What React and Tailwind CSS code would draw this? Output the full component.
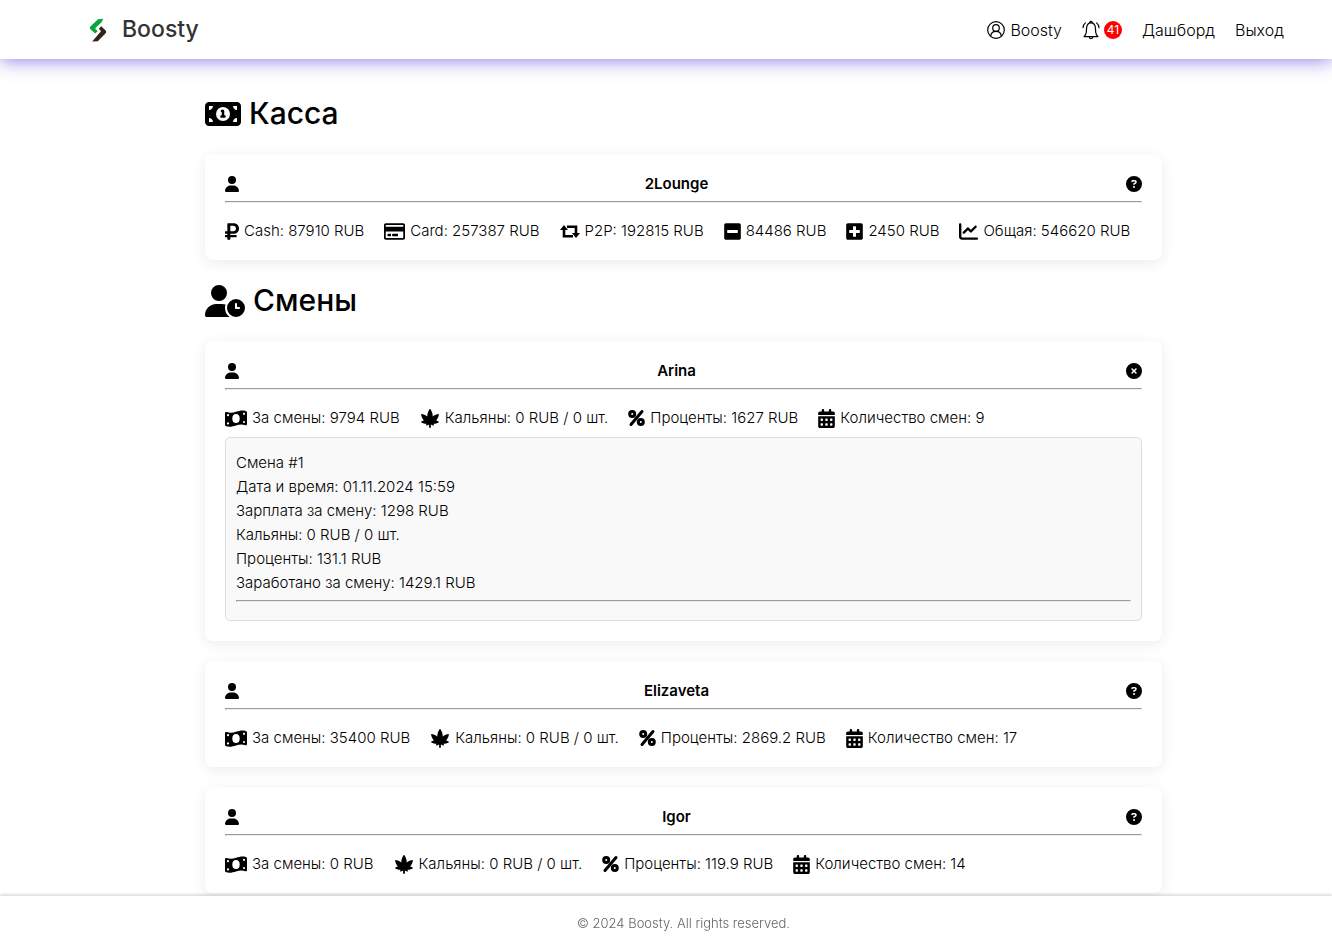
import { useState } from 'react';
import {
  FaUser, FaUserClock, FaMoneyBill1, FaChartLine, FaCannabis, FaCalendarDays, FaCircleQuestion, FaCircleXmark,
} from 'react-icons/fa6';
import { FaRubleSign, FaRegCreditCard, FaMinusSquare, FaPlusSquare } from 'react-icons/fa';

function PercentIcon({ className }) {
  return (
    <svg viewBox="0 0 17 19" className={className} fill="none" stroke="currentColor" strokeWidth="3">
      <circle cx="4.2" cy="5" r="2.5" />
      <circle cx="12.8" cy="13" r="2.5" />
      <path d="M14 2.5 3 15.5" strokeLinecap="round" />
    </svg>
  );
}

function RetweetIcon({ className }) {
  return (
    <svg viewBox="0 0 20 13" className={className} fill="none" stroke="currentColor" strokeWidth="2.6">
      <path d="M4 4v7.3h9M7 1.7h9V9" />
      <path d="M4 0 8 5H0ZM16 13l4-5h-8Z" fill="currentColor" stroke="none" />
    </svg>
  );
}

function BanknoteIcon({ className }) {
  return (
    <svg viewBox="0 0 22 19" className={className} fill="currentColor">
      <path d="M0 4.200C0 3.200.8 2.700 1.700 3c3.500 1.100 6.300.6 9.300-.3S17.500.9 20.800 1.900c.8.2 1.200.7 1.200 1.500V15c0 1-.8 1.500-1.700 1.200-3.500-1.100-6.300-.6-9.300.3s-6.500 1.800-9.800.8C.4 17.100 0 16.600 0 15.800Z" />
      <g fill="white">
        <ellipse cx="11" cy="9.600" rx="3.700" ry="4.500" />
        <circle cx="3" cy="6.200" r="1.100" />
        <circle cx="3" cy="14.400" r="1.100" />
        <circle cx="19" cy="4.800" r="1.100" />
        <circle cx="19" cy="13" r="1.100" />
      </g>
    </svg>
  );
}

function ProfileIcon() {
  return (
    <svg viewBox="0 0 18 18" className="size-[18px]" fill="none" stroke="currentColor" strokeWidth="1.2">
      <circle cx="9" cy="9" r="8.3" />
      <circle cx="9" cy="7" r="3.3" />
      <path d="M3.6 15.2C4 12.2 6 10.3 9 10.3s5 1.9 5.4 4.9" />
    </svg>
  );
}

function BellIcon() {
  return (
    <svg viewBox="0 0 18 20" className="h-5 w-[18px]" fill="none" stroke="currentColor" strokeWidth="1.2" strokeLinecap="round" strokeLinejoin="round">
      <path d="M9 2.8C6.200 2.800 4.800 5 4.600 8l-.3 4.200c-.1 1.500-.8 2.800-2.300 4.400h14c-1.500-1.600-2.200-2.900-2.300-4.400L13.400 8C13.200 5 11.800 2.800 9 2.800Z" />
      <path d="M7.800 2.600a1.200 1.200 0 0 1 2.400 0M7.200 16.800a1.800 1.800 0 0 0 3.600 0" />
      <path d="M3.400 2.900C2 4 1.200 5.600 1 7.600M14.600 2.900C16 4 16.800 5.600 17 7.600" />
    </svg>
  );
}

function Logo() {
  return (
    <svg viewBox="0 0 18 24" className="h-6 w-[18px]">
      <path d="M14.2 0.8 9 1.2 1.6 8.2C0.6 9.2 0.6 10.4 1.6 11.4L6.2 15.6 8.6 13.2 7 11.6C6.2 10.8 6.2 10.2 7 9.4L12.6 4.2Z" fill="#0aa63c" />
      <path d="M12.2 8.2 9.8 10.8 11.4 12.4C12 13 12 13.4 11.4 14L3.2 23.4 8.8 23.2 16.4 15.6C17.4 14.6 17.4 13.2 16.4 12.2Z" fill="#30241f" />
    </svg>
  );
}

const cash = [
  { icon: FaRubleSign, size: 'w-[14px]', text: 'Cash: 87910 RUB' },
  { icon: FaRegCreditCard, size: 'w-[21px]', text: 'Card: 257387 RUB' },
  { icon: RetweetIcon, size: 'w-5', text: 'P2P: 192815 RUB' },
  { icon: FaMinusSquare, size: 'w-[17px]', text: '84486 RUB' },
  { icon: FaPlusSquare, size: 'w-[17px]', text: '2450 RUB' },
  { icon: FaChartLine, size: 'w-[19px]', text: 'Общая: 546620 RUB' },
];

const workers = [
  {
    name: 'Arina', salary: '9794', percent: '1627', count: 9,
    shifts: [{ id: 1, date: '01.11.2024 15:59', salary: '1298', percent: '131.1', total: '1429.1' }],
  },
  { name: 'Elizaveta', salary: '35400', percent: '2869.2', count: 17, shifts: [] },
  { name: 'Igor', salary: '0', percent: '119.9', count: 14, shifts: [] },
];

function Line() {
  return <hr className="border border-[#9a9a9a] border-r-[#eeeeee] border-b-[#eeeeee]" />;
}

function Stats({ items }) {
  return (
    <ul className="flex flex-wrap gap-x-5">
      {items.map(({ icon: Icon, size, text }) => (
        <li key={text} className="flex items-center gap-[5px] leading-5">
          <Icon className={`h-[19px] shrink-0 ${size}`} />
          <span>{text}</span>
        </li>
      ))}
    </ul>
  );
}

function Card({ name, open, onToggle, items, children }) {
  return (
    <article className="mb-5 rounded-lg bg-white px-5 pt-5 pb-[19px] shadow-[0_3px_14px_rgba(0,0,0,0.08)]">
      <div className="mb-[7px] flex h-5 items-center">
        <FaUser className="h-4 w-[14px]" />
        <h3 className="flex-1 text-center font-semibold">{name}</h3>
        <button type="button" aria-label={name} onClick={onToggle} className="ml-3">
          {open ? <FaCircleXmark className="size-4" /> : <FaCircleQuestion className="size-4" />}
        </button>
      </div>
      <Line />
      <div className="mt-[18px]">
        <Stats items={items} />
      </div>
      {children}
    </article>
  );
}

function Shift({ shift }) {
  return (
    <div className="leading-6">
      <p>Смена #{shift.id}</p>
      <p>Дата и время: {shift.date}</p>
      <p>Зарплата за смену: {shift.salary} RUB</p>
      <p>Кальяны: 0 RUB / 0 шт.</p>
      <p>Проценты: {shift.percent} RUB</p>
      <p className="mb-[5px]">Заработано за смену: {shift.total} RUB</p>
      <Line />
    </div>
  );
}

export default function App() {
  const [opened, setOpened] = useState('Arina');
  const toggle = (name) => setOpened(opened === name ? null : name);

  return (
    <div className="min-h-screen bg-white pb-14 font-['Inter','Liberation_Sans',sans-serif] text-[15px] font-light text-black">
      <header className="flex h-[59px] items-center justify-between pr-12 pl-[89px] shadow-[0_0_20px_rgba(80,40,210,0.7)]">
        <a href="#" className="flex items-center gap-[15px] text-[23px] font-medium text-[#333333]">
          <Logo />
          Boosty
        </a>
        <nav className="flex items-center gap-5 text-base">
          <a href="#profile" className="flex items-center gap-[5px]">
            <ProfileIcon />
            Boosty
          </a>
          <a href="#notifications" className="flex items-center gap-1">
            <BellIcon />
            <span className="flex size-[18px] items-center justify-center rounded-full bg-[#ff0000] text-xs font-normal text-white">41</span>
          </a>
          <a href="#dashboard">Дашборд</a>
          <a href="#logout">Выход</a>
        </nav>
      </header>

      <div className="pt-[34px] pl-[35px]">
        <main className="mx-auto max-w-[957px]">
          <h1 className="mb-5 flex h-[41px] items-center gap-2 text-[30px] font-medium">
            <FaMoneyBill1 className="h-8 w-9" />
            Касса
          </h1>
          <Card name="2Lounge" open={opened === '2Lounge'} onToggle={() => toggle('2Lounge')} items={cash} />

          <h1 className="mb-5 flex h-[41px] items-center gap-2 text-[30px] font-medium">
            <FaUserClock className="h-8 w-10" />
            Смены
          </h1>
          {workers.map((w) => (
            <Card
              key={w.name}
              name={w.name}
              open={opened === w.name}
              onToggle={() => toggle(w.name)}
              items={[
                { icon: BanknoteIcon, size: 'w-[22px]', text: `За смены: ${w.salary} RUB` },
                { icon: FaCannabis, size: 'w-5', text: 'Кальяны: 0 RUB / 0 шт.' },
                { icon: PercentIcon, size: 'w-[17px]', text: `Проценты: ${w.percent} RUB` },
                { icon: FaCalendarDays, size: 'w-[17px]', text: `Количество смен: ${w.count}` },
              ]}
            >
              {opened === w.name && w.shifts.length > 0 && (
                <div className="mt-[9px] mb-px rounded-[5px] border border-[#dddddd] bg-[#f9f9f9] px-2.5 pt-[13px] pb-[18px]">
                  {w.shifts.map((s) => <Shift key={s.id} shift={s} />)}
                </div>
              )}
            </Card>
          ))}
        </main>
      </div>

      <footer className="fixed inset-x-0 bottom-0 flex h-[55px] items-center justify-center bg-white pl-[35px] text-[13px] text-[#666666] shadow-[0_-2px_2px_rgba(0,0,0,0.12)]">
        © 2024 Boosty. All rights reserved.
      </footer>
    </div>
  );
}
